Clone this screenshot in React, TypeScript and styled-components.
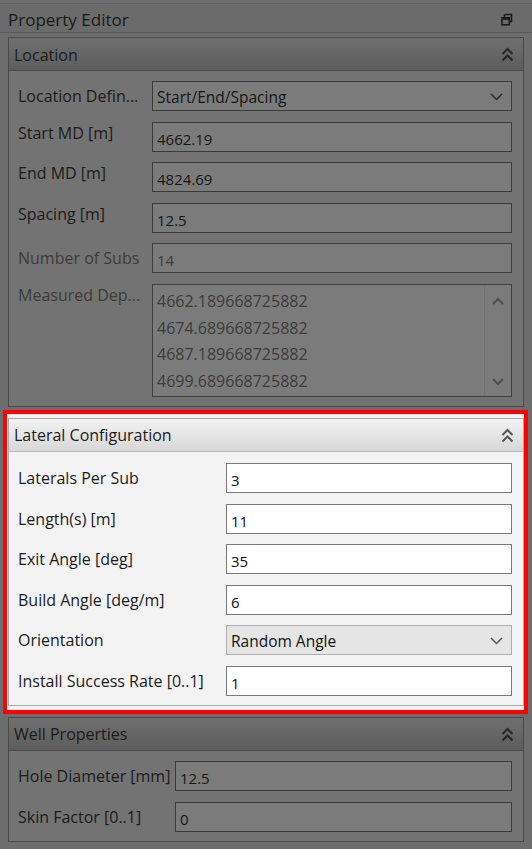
import React from "react";
import styled, { createGlobalStyle, css } from "styled-components";

const Global = createGlobalStyle`
  html, body { margin: 0; padding: 0; background: #6d6d6d; }
  body { font-family: "Open Sans", "Noto Sans", sans-serif; }
  * { box-sizing: border-box; }
`;

const Page = styled.div`
  width: 532px;
  height: 849px;
  overflow: hidden;
  background: #6d6d6d;
  padding-top: 3px;
  display: flex;
  flex-direction: column;
`;

const TitleBar = styled.div`
  height: 30px;
  display: flex;
  align-items: center;
  justify-content: space-between;
  padding: 3px 19px 0 8px;
  background: #6b6b6b;
  border-top: 1px solid #636363;
  border-bottom: 1px solid #5a5a5a;
  font-size: 17px;
  color: #1a1a1a;
`;

const Stack = styled.div`
  display: flex;
  flex-direction: column;
  padding: 4px 8px 0 8px;
  gap: 3px;
`;

const Highlight = styled.div`
  margin: 0 -4px 0 -5px;
  border: 4px solid #ff0000;
  padding: 4px 0 4px 1px;
  background: #f4f3f4;
`;

const Group = styled.div<{ $light?: boolean }>`
  border: 1px solid ${(p) => (p.$light ? "#a9a9a9" : "#4a4a4a")};
  background: ${(p) => (p.$light ? "#f4f3f4" : "#737373")};
  display: flex;
  flex-direction: column;
`;

const Header = styled.div<{ $light?: boolean }>`
  height: 33px;
  display: flex;
  align-items: center;
  justify-content: space-between;
  padding: 1px 9px 0 5px;
  font-size: 16px;
  color: #1b1b1b;
  ${(p) =>
    p.$light
      ? css`
          background: linear-gradient(#f3f3f3, #d7d7d7);
          border-bottom: 1px solid #bdbdbd;
        `
      : css`
          background: linear-gradient(#6f6f6f, #5d5d5d);
          border-bottom: 1px solid #4c4c4c;
        `}
`;

const Body = styled.div<{ $labelW: number; $top: number }>`
  display: grid;
  grid-template-columns: ${(p) => p.$labelW}px 1fr;
  row-gap: 10.6px;
  align-items: center;
  padding: ${(p) => p.$top}px 11px 9px 9px;
`;

const Label = styled.div<{ $disabled?: boolean; $shift?: number; $top?: boolean }>`
  font-size: 16px;
  line-height: 20px;
  white-space: nowrap;
  color: ${(p) => (p.$disabled ? "#3b3b3b" : "#1b1b1b")};
  align-self: ${(p) => (p.$top ? "start" : "center")};
  padding-top: ${(p) => (p.$top ? 1 : 0)}px;
  transform: translateY(${(p) => p.$shift ?? 0}px);
`;

const Field = styled.div<{ $light?: boolean; $disabled?: boolean }>`
  height: 30px;
  display: flex;
  align-items: center;
  padding: 4px 6px 0 4px;
  font-size: 15px;
  ${(p) =>
    p.$light
      ? css`
          background: #ffffff;
          border: 1px solid #7a7a7a;
          color: #111;
        `
      : css`
          background: #7b7b7b;
          border: 1px solid ${p.$disabled ? "#3f3f3f" : "#3a3a3a"};
          color: ${p.$disabled ? "#3c3c3c" : "#161616"};
        `}
`;

const Select = styled(Field)`
  justify-content: space-between;
  padding-right: 8px;
  padding-top: 2px;
  font-size: 15.5px;
  ${(p) =>
    p.$light &&
    css`
      background: #e5e5e5;
      border-color: #adadad;
    `}
`;

const ListBox = styled.div`
  height: 113px;
  display: flex;
  border: 1px solid #3f3f3f;
  background: #7b7b7b;
  color: #3c3c3c;
  font-size: 16px;
`;

const ListLines = styled.div`
  flex: 1;
  padding: 3px 0 0 4px;
  line-height: 26.6px;
`;

const ScrollBar = styled.div`
  width: 27px;
  border-left: 1px solid #727272;
  display: flex;
  flex-direction: column;
  justify-content: space-between;
  align-items: center;
  padding: 12px 0 10px;
`;

const DoubleChevron = ({ color }: { color: string }) => (
  <svg width="13" height="15" viewBox="0 0 13 15">
    <path d="M1.5 7 L6.5 2 L11.5 7" fill="none" stroke={color} strokeWidth="2" />
    <path d="M1.5 13.5 L6.5 8.5 L11.5 13.5" fill="none" stroke={color} strokeWidth="2" />
  </svg>
);

const DropChevron = ({ color }: { color: string }) => (
  <svg width="13" height="8" viewBox="0 0 13 8">
    <path d="M1 1 L6.5 6.5 L12 1" fill="none" stroke={color} strokeWidth="1.5" />
  </svg>
);

const SmallChevron = ({ up }: { up?: boolean }) => (
  <svg width="12" height="8" viewBox="0 0 12 8">
    <path
      d={up ? "M1 7 L6 2 L11 7" : "M1 1 L6 6 L11 1"}
      fill="none"
      stroke="#4e4e4e"
      strokeWidth="2"
    />
  </svg>
);

const RestoreIcon = () => (
  <svg width="12" height="13" viewBox="0 0 12 13">
    <path d="M3.5 1.5 H10.5 V8.5 H8.5" fill="none" stroke="#1c1c1c" strokeWidth="1.6" />
    <path d="M3.5 1.5 V4.5" fill="none" stroke="#1c1c1c" strokeWidth="1.6" />
    <rect x="1" y="4.8" width="7.3" height="7" fill="none" stroke="#1c1c1c" strokeWidth="1.6" />
    <rect x="1" y="4.8" width="7.3" height="2" fill="#1c1c1c" />
  </svg>
);

type Row = { label: string; value: string; kind?: "select" | "input"; disabled?: boolean; shift?: number };

const locationRows: Row[] = [
  { label: "Location Defin...", value: "Start/End/Spacing", kind: "select" },
  { label: "Start MD [m]", value: "4662.19", shift: -4 },
  { label: "End MD [m]", value: "4824.69", shift: -4 },
  { label: "Spacing [m]", value: "12.5", shift: -4 },
  { label: "Number of Subs", value: "14", disabled: true },
];

const lateralRows: Row[] = [
  { label: "Laterals Per Sub", value: "3" },
  { label: "Length(s) [m]", value: "11" },
  { label: "Exit Angle [deg]", value: "35" },
  { label: "Build Angle [deg/m]", value: "6" },
  { label: "Orientation", value: "Random Angle", kind: "select" },
  { label: "Install Success Rate [0..1]", value: "1" },
];

const wellRows: Row[] = [
  { label: "Hole Diameter [mm]", value: "12.5" },
  { label: "Skin Factor [0..1]", value: "0" },
];

const depths = ["4662.189668725882", "4674.689668725882", "4687.189668725882", "4699.689668725882"];

const renderRows = (rows: Row[], light?: boolean) =>
  rows.map((r) => (
    <React.Fragment key={r.label}>
      <Label $disabled={r.disabled} $shift={r.shift}>
        {r.label}
      </Label>
      {r.kind === "select" ? (
        <Select $light={light}>
          <span>{r.value}</span>
          <DropChevron color={light ? "#555" : "#2a2a2a"} />
        </Select>
      ) : (
        <Field $light={light} $disabled={r.disabled}>
          {r.value}
        </Field>
      )}
    </React.Fragment>
  ));

export default function App() {
  return (
    <Page>
      <Global />
      <TitleBar>
        <span>Property Editor</span>
        <RestoreIcon />
      </TitleBar>
      <Stack>
        <Group>
          <Header>
            <span>Location</span>
            <DoubleChevron color="#262626" />
          </Header>
          <Body $labelW={134} $top={10}>
            {renderRows(locationRows)}
            <Label $disabled $top>
              Measured Dep...
            </Label>
            <ListBox>
              <ListLines>
                {depths.map((d) => (
                  <div key={d}>{d}</div>
                ))}
              </ListLines>
              <ScrollBar>
                <SmallChevron up />
                <SmallChevron />
              </ScrollBar>
            </ListBox>
          </Body>
        </Group>
        <Highlight>
          <Group $light>
            <Header $light>
              <span>Lateral Configuration</span>
              <DoubleChevron color="#555555" />
            </Header>
            <Body $labelW={208} $top={11}>
              {renderRows(lateralRows, true)}
            </Body>
          </Group>
        </Highlight>
        <Group>
          <Header>
            <span>Well Properties</span>
            <DoubleChevron color="#262626" />
          </Header>
          <Body $labelW={157} $top={10}>
            {renderRows(wellRows)}
          </Body>
        </Group>
      </Stack>
    </Page>
  );
}
